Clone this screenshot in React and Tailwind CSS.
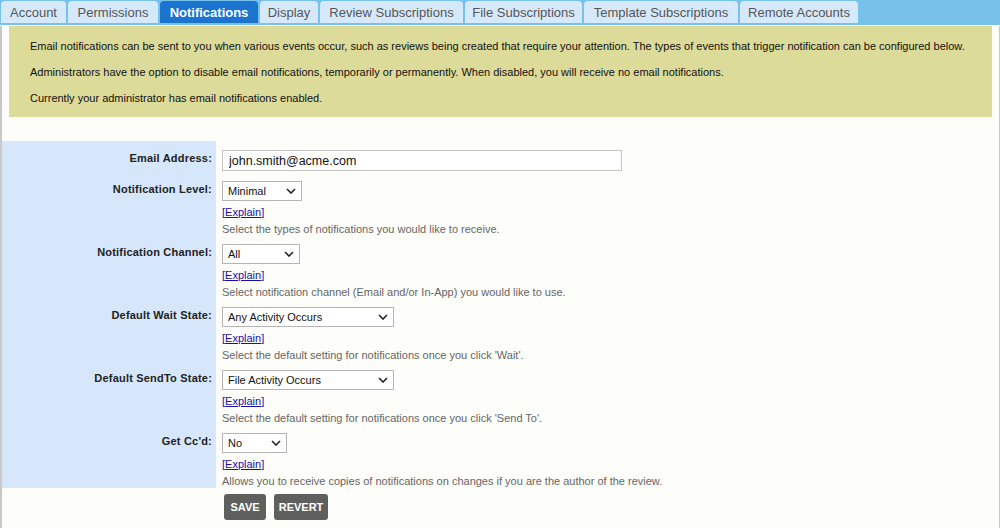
import { useState } from 'react'

const tabs = [
    { name: 'Account', w: 'w-[65px]' },
    { name: 'Permissions', w: 'w-[90px]' },
    { name: 'Notifications', w: 'w-[98px]', active: true },
    { name: 'Display', w: 'w-[58px]' },
    { name: 'Review Subscriptions', w: 'w-[143px]' },
    { name: 'File Subscriptions', w: 'w-[117px]' },
    { name: 'Template Subscriptions', w: 'w-[154px]' },
    { name: 'Remote Accounts', w: 'w-[118px]' },
]

function Chevron() {
    return (
        <svg width="10" height="6" viewBox="0 0 10 6" className="pointer-events-none absolute right-[6px] top-[7px]">
            <path d="M1 1l4 4 4-4" fill="none" stroke="#222" strokeWidth="1.6" />
        </svg>
    )
}

function Select({ value, options, width }) {
    const [val, setVal] = useState(value)
    return (
        <div className={`relative h-[20px] ${width}`}>
            <select
                value={val}
                onChange={e => setVal(e.target.value)}
                className="block h-[20px] w-full appearance-none border border-[#b5b5b5] bg-white pl-[5px] text-[11px] text-[#111] outline-none"
            >
                {options.map(o => <option key={o}>{o}</option>)}
            </select>
            <Chevron />
        </div>
    )
}

function Row({ label, children, desc, first }) {
    const pad = first ? 'pt-[9px] pb-[2px]' : 'pt-[8px]'
    return (
        <>
            <div className={`bg-[#d6e7fc] pr-[4px] ${pad} text-right text-[11px] font-bold leading-[16px] tracking-[0.2px] text-[#222]`}>
                {label}
            </div>
            <div className={`pl-[6px] ${pad}`}>
                {children}
                {desc && (
                    <>
                        <div className="mt-[4px] text-[11px] leading-[14px] text-[#1a0dab]">
                            <a href="#">[<span className="underline">Explain</span>]</a>
                        </div>
                        <div className="mt-[3px] text-[11px] leading-[14px] text-[#666]">{desc}</div>
                    </>
                )}
            </div>
        </>
    )
}

export default function App() {
    const [email, setEmail] = useState('john.smith@acme.com')

    return (
        <div className="h-[528px] w-[1000px] overflow-hidden bg-white font-['Liberation_Sans',Arial,sans-serif]">
            <nav className="flex h-[25px] gap-[2px] bg-[#76c2ea] pl-[1px] pt-[1px]">
                {tabs.map(t => (
                    <div
                        key={t.name}
                        className={`${t.w} flex h-[22px] items-center justify-center rounded-t-[4px] pt-[1px] text-[13px] ${
                            t.active ? 'bg-[#1b74d0] font-bold text-white' : 'bg-[#d6e9fb] text-[#555]'
                        }`}
                    >
                        {t.name}
                    </div>
                ))}
            </nav>

            <main className="h-[503px] border-b border-l-2 border-r border-[#c8c8c8] bg-[#fdfdfa]">
                <section className="mx-[7px] mt-[1px] bg-[#dddb99] pb-[12px] pl-[21px] pt-[13px] text-[11px] leading-[14px] text-[#111]">
                    <p>Email notifications can be sent to you when various events occur, such as reviews being created that require your attention. The types of events that trigger notification can be configured below.</p>
                    <p className="mt-[12px]">Administrators have the option to disable email notifications, temporarily or permanently. When disabled, you will receive no email notifications.</p>
                    <p className="mt-[12px]">Currently your administrator has email notifications enabled.</p>
                </section>

                <div className="mt-[24px] grid grid-cols-[214px_1fr]">
                    <Row label="Email Address:" first>
                        <input
                            value={email}
                            onChange={e => setEmail(e.target.value)}
                            className="block h-[21px] w-[400px] border border-[#c4c4c4] bg-white pl-[6px] text-[12.5px] text-[#111] outline-none"
                        />
                    </Row>
                    <Row label="Notification Level:" desc="Select the types of notifications you would like to receive.">
                        <Select value="Minimal" options={['Minimal', 'Normal', 'Verbose']} width="w-[80px]" />
                    </Row>
                    <Row label="Notification Channel:" desc="Select notification channel (Email and/or In-App) you would like to use.">
                        <Select value="All" options={['All', 'Email', 'In-App']} width="w-[78px]" />
                    </Row>
                    <Row label="Default Wait State:" desc="Select the default setting for notifications once you click 'Wait'.">
                        <Select value="Any Activity Occurs" options={['Any Activity Occurs', 'File Activity Occurs']} width="w-[172px]" />
                    </Row>
                    <Row label="Default SendTo State:" desc="Select the default setting for notifications once you click 'Send To'.">
                        <Select value="File Activity Occurs" options={['Any Activity Occurs', 'File Activity Occurs']} width="w-[172px]" />
                    </Row>
                    <Row label="Get Cc'd:" desc="Allows you to receive copies of notifications on changes if you are the author of the review.">
                        <Select value="No" options={['No', 'Yes']} width="w-[65px]" />
                    </Row>
                </div>

                <div className="ml-[222px] mt-[6px] flex gap-[8px]">
                    <button className="h-[26px] w-[42px] rounded-[3px] bg-[#5f605e] text-[11px] font-bold text-white">SAVE</button>
                    <button className="h-[26px] w-[54px] rounded-[3px] bg-[#5f605e] text-[11px] font-bold text-white">REVERT</button>
                </div>
            </main>
        </div>
    )
}
